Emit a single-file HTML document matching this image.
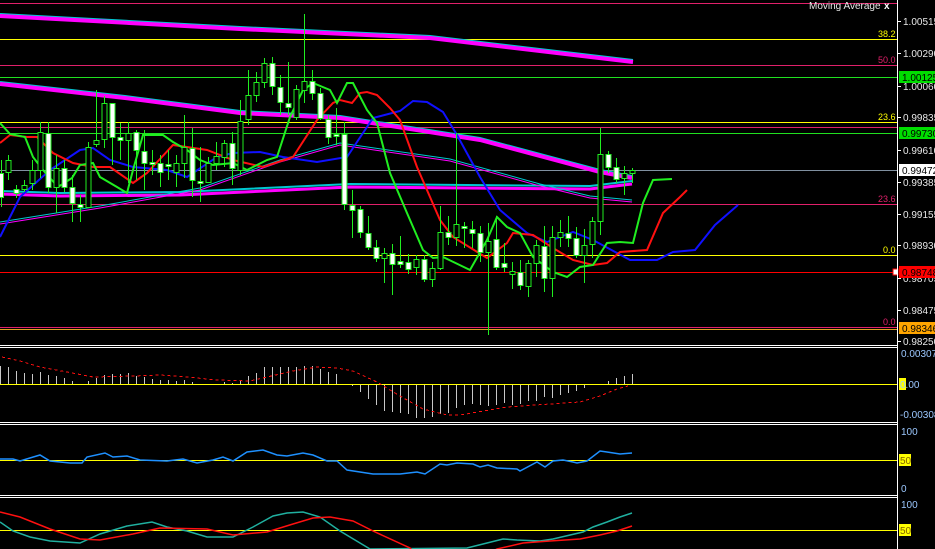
<!DOCTYPE html>
<html><head><meta charset="utf-8"><style>
html,body{margin:0;padding:0;background:#000;width:935px;height:549px;overflow:hidden}
svg{display:block}
text{font-family:"Liberation Sans",sans-serif;font-size:10px}
</style></head><body>
<svg width="935" height="549" viewBox="0 0 935 549" xmlns="http://www.w3.org/2000/svg" shape-rendering="crispEdges">
<rect width="935" height="549" fill="#000"/>
<!-- fib / horizontal lines main -->
<g stroke-width="1">
<line x1="0" y1="3.5" x2="897" y2="3.5" stroke="#e0206a"/>
<line x1="0" y1="39.5" x2="897" y2="39.5" stroke="#ffff00"/>
<line x1="0" y1="65.5" x2="897" y2="65.5" stroke="#e0206a"/>
<line x1="0" y1="77.5" x2="897" y2="77.5" stroke="#20e020"/>
<line x1="0" y1="122.5" x2="897" y2="122.5" stroke="#ffff00"/>
<line x1="0" y1="127.5" x2="897" y2="127.5" stroke="#e0206a"/>
<line x1="0" y1="133.5" x2="897" y2="133.5" stroke="#20e020"/>
<line x1="0" y1="170.5" x2="897" y2="170.5" stroke="#8090a0"/>
<line x1="0" y1="204.5" x2="897" y2="204.5" stroke="#e0206a"/>
<line x1="0" y1="255.5" x2="897" y2="255.5" stroke="#ffff00"/>
<line x1="0" y1="272.5" x2="897" y2="272.5" stroke="#ff0000"/>
<line x1="0" y1="327.5" x2="897" y2="327.5" stroke="#e0206a"/>
<line x1="0" y1="329.5" x2="897" y2="329.5" stroke="#e0a020"/>
</g>
<rect x="893" y="269" width="5" height="6" fill="#fff" stroke="#f00"/>
<!-- moving average bands -->
<g fill="none" shape-rendering="auto">
<polyline points="0,14 240,27 430,36 633,60" stroke="#00c8d0" stroke-width="2"/>
<polyline points="0,16 240,29 430,38 633,62" stroke="#ff00ff" stroke-width="4"/>
<polyline points="0,82 125,96 240,111 340,116 480,138 600,170 632,176" stroke="#00c8d0" stroke-width="2"/>
<polyline points="0,84 125,98 240,113 340,118 480,140 600,172 632,178" stroke="#ff00ff" stroke-width="4"/>
<polyline points="0,191 60,193 180,192 350,184 590,186 632,181" stroke="#00c8d0" stroke-width="2"/>
<polyline points="0,194 60,196 180,195 350,187 590,189 632,184" stroke="#ff00ff" stroke-width="3"/>
<polyline points="0,222 100,206 200,188 280,160 340,143 450,159 540,184 590,196 632,200" stroke="#00c8d0" stroke-width="1"/>
<polyline points="0,224 100,208 200,190 280,162 340,145 450,161 540,186 590,198 632,202" stroke="#ff00ff" stroke-width="1"/>
<!-- blue -->
<polyline stroke="#1010ff" stroke-width="2" points="0,237 20,197 50,170 80,150 93,148 110,160 133,167 167,170 187,177 217,157 233,153 260,152 283,157 317,162 347,157 373,118 400,111 413,101 427,102 443,112 457,135 480,177 500,210 527,233 547,242 573,232 593,240 630,260 657,260 673,252 695,250 715,225 738,205"/>
<!-- red -->
<polyline stroke="#ff1010" stroke-width="2" points="0,143 10,135 27,137 37,137 53,153 73,163 93,167 110,167 133,183 147,173 173,145 207,150 233,160 263,167 293,157 317,120 333,103 340,100 352,103 360,93 367,92 377,95 390,108 400,120 417,167 440,220 453,237 487,258 507,243 513,233 533,235 553,248 573,260 593,265 607,263 620,252 647,250 663,213 680,197 687,190"/>
<!-- green MA -->
<polyline stroke="#20ee20" stroke-width="2" points="0,123 10,134 25,137 33,157 43,170 58,187 72,178 80,165 93,163 100,177 117,187 127,193 133,170 143,135 163,135 173,142 187,150 200,160 213,165 233,163 247,170 267,160 277,157 290,117 303,90 313,83 330,90 337,103 347,83 353,83 367,110 377,123 390,173 407,213 423,250 433,258 443,257 470,270 487,240 497,217 507,227 520,233 533,257 553,272 567,277 580,267 593,265 607,243 620,242 633,243 643,203 653,180 672,179"/>
</g>
<!-- candles -->
<g stroke="#20ee20" stroke-width="1" fill="#fff">
<!-- cx,bt,bb,wt,wb -->
<line x1="1.5" y1="160" x2="1.5" y2="207"/><rect x="-1.5" y="173.5" width="5" height="24"/>
<line x1="8.5" y1="155" x2="8.5" y2="180"/><rect x="6" y="160.5" width="5" height="12" fill="#000"/>
<line x1="16.5" y1="185" x2="16.5" y2="198"/><rect x="14" y="189.5" width="5" height="4"/>
<line x1="24.5" y1="180" x2="24.5" y2="192"/><rect x="22" y="185.5" width="5" height="4" fill="#000"/>
<line x1="32.5" y1="160" x2="32.5" y2="190"/><rect x="30" y="170.5" width="5" height="13" fill="#000"/>
<line x1="40.5" y1="122" x2="40.5" y2="178"/><rect x="38" y="132.5" width="5" height="38" fill="#000"/>
<line x1="48.5" y1="122" x2="48.5" y2="193"/><rect x="46" y="133.5" width="5" height="54"/>
<line x1="56.5" y1="155" x2="56.5" y2="213"/><rect x="54" y="168.5" width="5" height="19" fill="#000"/>
<line x1="64.5" y1="160" x2="64.5" y2="192"/><rect x="62" y="168.5" width="5" height="19"/>
<line x1="72.5" y1="175" x2="72.5" y2="222"/><rect x="70" y="187.5" width="5" height="16"/>
<line x1="80.5" y1="195" x2="80.5" y2="222"/><rect x="78" y="204.5" width="5" height="3"/>
<line x1="88.5" y1="142" x2="88.5" y2="208"/><rect x="86" y="147.5" width="5" height="60" fill="#000"/>
<line x1="96.5" y1="90" x2="96.5" y2="147"/><rect x="94" y="140.5" width="5" height="4" fill="#000"/>
<line x1="104.5" y1="96" x2="104.5" y2="148"/><rect x="102" y="103.5" width="5" height="36" fill="#000"/>
<line x1="112.5" y1="103" x2="112.5" y2="165"/><rect x="110" y="103.5" width="5" height="34"/>
<line x1="120.5" y1="123" x2="120.5" y2="160"/><rect x="118" y="137.5" width="5" height="3"/>
<line x1="128.5" y1="122" x2="128.5" y2="183"/><rect x="126" y="133.5" width="5" height="7" fill="#000"/>
<line x1="136.5" y1="130" x2="136.5" y2="180"/><rect x="134" y="132.5" width="5" height="18"/>
<line x1="144.5" y1="130" x2="144.5" y2="190"/><rect x="142" y="151.5" width="5" height="12"/>
<line x1="152.5" y1="150" x2="152.5" y2="175"/><rect x="150" y="162.5" width="5" height="2"/>
<line x1="160.5" y1="155" x2="160.5" y2="187"/><rect x="158" y="163.5" width="5" height="9"/>
<line x1="168.5" y1="150" x2="168.5" y2="180"/><rect x="166" y="164.5" width="5" height="2"/>
<line x1="176.5" y1="155" x2="176.5" y2="187"/><rect x="174" y="163.5" width="5" height="9" fill="#000"/>
<line x1="184.5" y1="115" x2="184.5" y2="178"/><rect x="182" y="147.5" width="5" height="16" fill="#000"/>
<line x1="192.5" y1="128" x2="192.5" y2="197"/><rect x="190" y="148.5" width="5" height="32"/>
<line x1="200.5" y1="147" x2="200.5" y2="202"/><rect x="198" y="181.5" width="5" height="2"/>
<line x1="208.5" y1="157" x2="208.5" y2="183"/><rect x="206" y="163.5" width="5" height="19" fill="#000"/>
<line x1="216.5" y1="142" x2="216.5" y2="170"/><rect x="214" y="156.5" width="5" height="7" fill="#000"/>
<line x1="224.5" y1="140" x2="224.5" y2="167"/><rect x="222" y="143.5" width="5" height="14" fill="#000"/>
<line x1="232.5" y1="132" x2="232.5" y2="185"/><rect x="230" y="143.5" width="5" height="25"/>
<line x1="240.5" y1="100" x2="240.5" y2="175"/><rect x="238" y="121.5" width="5" height="49" fill="#000"/>
<line x1="248.5" y1="70" x2="248.5" y2="125"/><rect x="246" y="95.5" width="5" height="24" fill="#000"/>
<line x1="256.5" y1="72" x2="256.5" y2="102"/><rect x="254" y="82.5" width="5" height="13" fill="#000"/>
<line x1="264.5" y1="58" x2="264.5" y2="88"/><rect x="262" y="63.5" width="5" height="19" fill="#000"/>
<line x1="272.5" y1="57" x2="272.5" y2="95"/><rect x="270" y="63.5" width="5" height="23"/>
<line x1="280.5" y1="75" x2="280.5" y2="115"/><rect x="278" y="87.5" width="5" height="15"/>
<line x1="288.5" y1="62" x2="288.5" y2="115"/><rect x="286" y="103.5" width="5" height="4"/>
<line x1="296.5" y1="85" x2="296.5" y2="120"/><rect x="294" y="89.5" width="5" height="28" fill="#000"/>
<line x1="304.5" y1="14" x2="304.5" y2="103"/><rect x="302" y="81.5" width="5" height="9" fill="#000"/>
<line x1="312.5" y1="70" x2="312.5" y2="100"/><rect x="310" y="81.5" width="5" height="12"/>
<line x1="320.5" y1="88" x2="320.5" y2="120"/><rect x="318" y="93.5" width="5" height="25"/>
<line x1="328.5" y1="115" x2="328.5" y2="144"/><rect x="326" y="119.5" width="5" height="18"/>
<line x1="336.5" y1="108" x2="336.5" y2="145"/><rect x="334" y="134.5" width="5" height="2"/>
<line x1="344.5" y1="122" x2="344.5" y2="210"/><rect x="342" y="134.5" width="5" height="70"/>
<line x1="352.5" y1="190" x2="352.5" y2="238"/><rect x="350" y="205.5" width="5" height="5"/>
<line x1="360.5" y1="206" x2="360.5" y2="238"/><rect x="358" y="209.5" width="5" height="23"/>
<line x1="368.5" y1="216" x2="368.5" y2="250"/><rect x="366" y="233.5" width="5" height="14"/>
<line x1="376.5" y1="240" x2="376.5" y2="262"/><rect x="374" y="247.5" width="5" height="11"/>
<line x1="384.5" y1="248" x2="384.5" y2="283"/><rect x="382" y="253.5" width="5" height="5" fill="#000"/>
<line x1="392.5" y1="244" x2="392.5" y2="295"/><rect x="390" y="253.5" width="5" height="11"/>
<line x1="400.5" y1="236" x2="400.5" y2="268"/><rect x="398" y="261.5" width="5" height="3"/>
<line x1="408.5" y1="254" x2="408.5" y2="274"/><rect x="406" y="262.5" width="5" height="7"/>
<line x1="416.5" y1="255" x2="416.5" y2="275"/><rect x="414" y="259.5" width="5" height="8" fill="#000"/>
<line x1="424.5" y1="255" x2="424.5" y2="282"/><rect x="422" y="259.5" width="5" height="20"/>
<line x1="432.5" y1="262" x2="432.5" y2="287"/><rect x="430" y="268.5" width="5" height="11" fill="#000"/>
<line x1="440.5" y1="206" x2="440.5" y2="270"/><rect x="438" y="232.5" width="5" height="36" fill="#000"/>
<line x1="448.5" y1="216" x2="448.5" y2="245"/><rect x="446" y="232.5" width="5" height="5"/>
<line x1="456.5" y1="133" x2="456.5" y2="246"/><rect x="454" y="224.5" width="5" height="13" fill="#000"/>
<line x1="464.5" y1="222" x2="464.5" y2="248"/><rect x="462" y="226.5" width="5" height="2"/>
<line x1="472.5" y1="221" x2="472.5" y2="248"/><rect x="470" y="229.5" width="5" height="4"/>
<line x1="480.5" y1="226" x2="480.5" y2="262"/><rect x="478" y="233.5" width="5" height="19"/>
<line x1="488.5" y1="223" x2="488.5" y2="335"/><rect x="486" y="241.5" width="5" height="11" fill="#000"/>
<line x1="496.5" y1="216" x2="496.5" y2="270"/><rect x="494" y="239.5" width="5" height="28"/>
<line x1="504.5" y1="243" x2="504.5" y2="272"/><rect x="502" y="263.5" width="5" height="4"/>
<line x1="512.5" y1="262" x2="512.5" y2="289"/><rect x="510" y="271.5" width="5" height="3" fill="#000"/>
<line x1="520.5" y1="260" x2="520.5" y2="290"/><rect x="518" y="272.5" width="5" height="13"/>
<line x1="528.5" y1="260" x2="528.5" y2="297"/><rect x="526" y="263.5" width="5" height="23" fill="#000"/>
<line x1="536.5" y1="240" x2="536.5" y2="277"/><rect x="534" y="245.5" width="5" height="18" fill="#000"/>
<line x1="544.5" y1="226" x2="544.5" y2="292"/><rect x="542" y="246.5" width="5" height="32"/>
<line x1="552.5" y1="226" x2="552.5" y2="297"/><rect x="550" y="237.5" width="5" height="41" fill="#000"/>
<line x1="560.5" y1="220" x2="560.5" y2="247"/><rect x="558" y="232.5" width="5" height="5" fill="#000"/>
<line x1="568.5" y1="216" x2="568.5" y2="247"/><rect x="566" y="233.5" width="5" height="5"/>
<line x1="576.5" y1="227" x2="576.5" y2="258"/><rect x="574" y="238.5" width="5" height="17"/>
<line x1="584.5" y1="229" x2="584.5" y2="283"/><rect x="582" y="245.5" width="5" height="10" fill="#000"/>
<line x1="592.5" y1="217" x2="592.5" y2="258"/><rect x="590" y="221.5" width="5" height="23" fill="#000"/>
<line x1="600.5" y1="128" x2="600.5" y2="235"/><rect x="598" y="154.5" width="5" height="67" fill="#000"/>
<line x1="608.5" y1="151" x2="608.5" y2="173"/><rect x="606" y="154.5" width="5" height="13"/>
<line x1="616.5" y1="158" x2="616.5" y2="183"/><rect x="614" y="167.5" width="5" height="12"/>
<line x1="624.5" y1="166" x2="624.5" y2="195"/><rect x="622" y="173.5" width="5" height="5" fill="#000"/>
<line x1="632.5" y1="168" x2="632.5" y2="183"/><rect x="630" y="170.5" width="5" height="3" fill="#000"/>
</g>
<!-- panel separators -->
<g stroke="#fff" stroke-width="1">
<line x1="0" y1="345.5" x2="897" y2="345.5"/>
<line x1="0" y1="347.5" x2="897" y2="347.5"/>
<line x1="0" y1="422.5" x2="897" y2="422.5"/>
<line x1="0" y1="424.5" x2="897" y2="424.5"/>
<line x1="0" y1="495.5" x2="897" y2="495.5"/>
<line x1="0" y1="497.5" x2="897" y2="497.5"/>
<line x1="897.5" y1="0" x2="897.5" y2="549"/>
</g>
<!-- MACD -->
<line x1="0" y1="384.5" x2="897" y2="384.5" stroke="#ffff00"/>
<g stroke="#c8c8c8" stroke-width="1">
<path d="M0.5 384V366M8.5 384V367M16.5 384V371M24.5 384V373M32.5 384V374M40.5 384V372M48.5 384V375M56.5 384V376M64.5 384V378M72.5 384V381M88.5 384V381M96.5 384V378M104.5 384V375M112.5 384V374M120.5 384V374M128.5 384V373M136.5 384V376M144.5 384V377M152.5 384V379M160.5 384V380M168.5 384V380M176.5 384V381M184.5 384V380M192.5 384V382M224.5 384V382M232.5 384V383M240.5 384V381M248.5 384V376M256.5 384V373M264.5 384V367M272.5 384V367M280.5 384V367M288.5 384V367M296.5 384V367M304.5 384V366M312.5 384V366M320.5 384V369M328.5 384V372M336.5 384V374"/>
<path d="M352.5 385V386M360.5 385V392M368.5 385V399M376.5 385V405M384.5 385V411M392.5 385V412M400.5 385V413M408.5 385V414M416.5 385V418M424.5 385V418M432.5 385V417M440.5 385V414M448.5 385V413M456.5 385V408M464.5 385V405M472.5 385V404M480.5 385V405M488.5 385V406M496.5 385V405M504.5 385V403M512.5 385V405M520.5 385V404M528.5 385V401M536.5 385V401M544.5 385V397M552.5 385V398M560.5 385V395M568.5 385V393M576.5 385V391M584.5 385V388M608.5 384V381M616.5 384V378M624.5 384V376M632.5 384V374"/>
</g>
<polyline fill="none" stroke="#ff1010" stroke-width="1" stroke-dasharray="3,3" points="2,357 20,361 40,367 67,372 93,377 133,376 160,375 187,377 217,380 250,381 267,377 293,371 317,367 337,368 353,371 377,382 400,396 423,409 447,415 460,415 507,407 550,404 580,402 600,396 617,389 628,386"/>
<!-- RSI panel -->
<line x1="0" y1="460.5" x2="897" y2="460.5" stroke="#ffff00"/>
<polyline fill="none" stroke="#1e90ff" stroke-width="1.5" shape-rendering="auto" points="0,459 13,459 20,461 40,455 50,461 70,463 82,463 87,457 105,453 113,457 127,456 140,460 167,461 183,459 197,463 213,460 223,457 233,461 247,452 263,450 277,455 287,456 303,453 313,455 327,461 337,461 347,470 373,474 400,474 417,472 425,474 440,464 447,465 457,463 473,464 480,467 488,465 497,468 517,469 520,471 537,462 545,467 553,461 563,460 573,462 577,463 587,461 600,451 607,452 620,454 632,453"/>
<!-- Stoch panel -->
<line x1="0" y1="530.5" x2="897" y2="530.5" stroke="#ffff00"/>
<polyline fill="none" stroke="#20b0a0" stroke-width="1.5" shape-rendering="auto" points="0,522 13,531 30,537 50,541 80,543 100,534 127,526 152,522 167,527 187,531 207,537 233,537 253,527 273,516 287,513 303,512 320,517 340,531 370,549 467,548 483,544 503,539 517,540 540,541 553,539 583,532 593,527 607,522 620,517 632,513"/>
<polyline fill="none" stroke="#ff1010" stroke-width="1.5" shape-rendering="auto" points="0,512 20,517 50,529 80,539 100,540 133,534 160,528 207,529 233,535 267,532 293,524 313,518 330,517 353,521 373,531 410,548 412,550 495,550 497,549 523,543 550,541 580,539 600,535 617,531 632,526"/>
<!-- axis ticks -->
<g stroke="#fff"><path d="M897 21.5h4M897 53.5h4M897 86.5h4M897 117.5h4M897 150.5h4M897 182.5h4M897 214.5h4M897 245.5h4M897 278.5h4M897 310.5h4M897 341.5h4"/></g>
<!-- axis labels -->
<g fill="#e8e8e8">
<text x="903" y="25">1.00515</text>
<text x="903" y="57">1.00290</text>
<text x="903" y="90">1.00060</text>
<text x="903" y="121">0.99835</text>
<text x="903" y="154">0.99610</text>
<text x="903" y="186">0.99385</text>
<text x="903" y="218">0.99155</text>
<text x="903" y="249">0.98930</text>
<text x="903" y="282">0.98705</text>
<text x="903" y="314">0.98475</text>
<text x="903" y="345">0.98250</text>
</g>
<rect x="899" y="71" width="36" height="12" fill="#00dd00"/><text x="902" y="81" fill="#000">1.00125</text>
<rect x="899" y="127" width="36" height="12" fill="#00dd00"/><text x="902" y="137" fill="#000">0.99730</text>
<rect x="899" y="164" width="36" height="12" fill="#fff"/><text x="902" y="174" fill="#000">0.99472</text>
<rect x="899" y="266" width="36" height="12" fill="#ff0000"/><text x="902" y="276" fill="#000">0.98748</text>
<rect x="899" y="322" width="36" height="12" fill="#ffa500"/><text x="902" y="332" fill="#000">0.98346</text>
<g fill="#9cc8ff">
<text x="901" y="357">0.003079</text>
<rect x="899" y="378" width="7" height="12" fill="#ffff00"/>
<text x="900" y="388">0.00</text>
<text x="900" y="418">-0.00308</text>
<text x="901" y="435">100</text>
<text x="901" y="492">0</text>
<text x="901" y="508">100</text>
</g>
<rect x="899" y="454" width="12" height="12" fill="#ffff00"/><text x="900" y="464" fill="#806000">50</text>
<rect x="899" y="524" width="12" height="12" fill="#ffff00"/><text x="900" y="534" fill="#806000">50</text>
<!-- fib labels -->
<g font-size="9">
<text x="878" y="37" fill="#ffff00" style="font-size:9px">38.2</text>
<text x="878" y="63" fill="#e0206a" style="font-size:9px">50.0</text>
<text x="878" y="120" fill="#ffff00" style="font-size:9px">23.6</text>
<text x="878" y="202" fill="#e0206a" style="font-size:9px">23.6</text>
<text x="883" y="253" fill="#ffff00" style="font-size:9px">0.0</text>
<text x="883" y="325" fill="#e0206a" style="font-size:9px">0.0</text>
</g>
<text x="809" y="9" fill="#e8e8e8">Moving Average</text>
<text x="884" y="9" fill="#fff" style="font-weight:bold">x</text>
</svg>
</body></html>
